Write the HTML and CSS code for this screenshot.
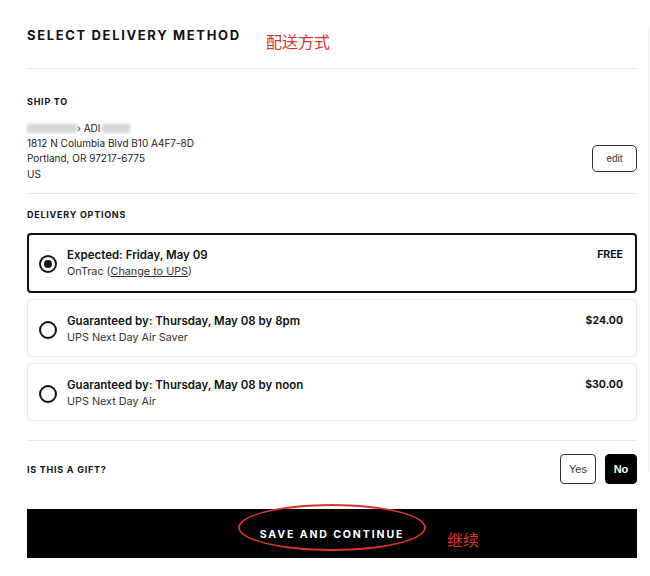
FILE: index.html
```html
<!DOCTYPE html>
<html lang="en">
<head>
    <meta charset="UTF-8">
    <meta name="viewport" content="width=device-width, initial-scale=1.0">
    <title>Select Delivery Method</title>
    <link rel="stylesheet" href="styles.css">
</head>
<body>
    <div class="side-line"></div>
    <div class="checkout">
        <!-- Header -->
        <div class="header">
            <h2>SELECT DELIVERY METHOD</h2>
            <span class="note note-title">配送方式</span>
        </div>

        <!-- Ship To -->
        <div class="ship-to">
            <h4>SHIP TO</h4>
            <div class="ship-row">
                <div class="address">
                    <div class="name"><span class="blur blur-a"></span><span>› ADI</span><span class="blur blur-b"></span></div>
                    <div>1812 N Columbia Blvd B10 A4F7-8D</div>
                    <div>Portland, OR 97217-6775</div>
                    <div>US</div>
                </div>
                <button class="btn-edit" type="button">edit</button>
            </div>
        </div>

        <!-- Delivery Options -->
        <div class="options">
            <h4>DELIVERY OPTIONS</h4>
            <div class="option selected">
                <span class="radio"></span>
                <div class="option-text">
                    <div class="option-title">Expected: Friday, May 09</div>
                    <div class="option-sub">OnTrac (<a href="#">Change to UPS</a>)</div>
                </div>
                <span class="price">FREE</span>
            </div>
            <div class="option">
                <span class="radio"></span>
                <div class="option-text">
                    <div class="option-title">Guaranteed by: Thursday, May 08 by 8pm</div>
                    <div class="option-sub">UPS Next Day Air Saver</div>
                </div>
                <span class="price">$24.00</span>
            </div>
            <div class="option">
                <span class="radio"></span>
                <div class="option-text">
                    <div class="option-title">Guaranteed by: Thursday, May 08 by noon</div>
                    <div class="option-sub">UPS Next Day Air</div>
                </div>
                <span class="price">$30.00</span>
            </div>
        </div>

        <!-- Gift -->
        <div class="gift">
            <h4>IS THIS A GIFT?</h4>
            <div class="gift-buttons">
                <button class="btn-toggle" type="button">Yes</button>
                <button class="btn-toggle active" type="button">No</button>
            </div>
        </div>

        <!-- Save -->
        <div class="save-wrap">
            <button class="btn-save" type="button">SAVE AND CONTINUE</button>
            <span class="ring"></span>
            <span class="note note-save">继续</span>
        </div>
    </div>
</body>
</html>
```

FILE: styles.css
```css
/* Global Styles */
body {
    margin: 0;
    padding: 0;
    background: #ffffff;
    font-family: 'Inter', 'Noto Sans', sans-serif;
    color: #111;
}

.side-line {
    position: absolute;
    left: 648px;
    top: 28px;
    width: 1px;
    height: 444px;
    background: #ececec;
}

.checkout {
    position: relative;
    width: 610px;
    margin-left: 27px;
}

h4 {
    margin: 0;
    font-size: 9px;
    font-weight: 700;
    letter-spacing: 0.75px;
    color: #111;
}

/* Header */
.header {
    height: 69px;
    box-sizing: border-box;
    padding-top: 27px;
    border-bottom: 1px solid #e6e6e6;
}

.header h2 {
    margin: 0;
    font-size: 13px;
    font-weight: 700;
    letter-spacing: 1.65px;
    line-height: 16px;
    color: #111;
}

.note {
    position: absolute;
    color: #d9342b;
    font-family: 'Noto Sans CJK SC', sans-serif;
    font-size: 16px;
    line-height: 20px;
}

.note-title {
    left: 239px;
    top: 31px;
}

/* Ship To */
.ship-to {
    padding-top: 27px;
    height: 125px;
    box-sizing: border-box;
    border-bottom: 1px solid #e6e6e6;
}

.ship-row {
    display: flex;
    align-items: flex-end;
    justify-content: space-between;
    margin-top: 14px;
}

.address {
    font-size: 10px;
    line-height: 15.3px;
    color: #222;
}

.name {
    display: flex;
    align-items: center;
    height: 15px;
}

.blur {
    display: inline-block;
    height: 9px;
    background: #d6d6d6;
    filter: blur(1.5px);
}

.blur-a {
    width: 50px;
}

.blur-b {
    width: 28px;
    margin-left: 2px;
}

.btn-edit {
    width: 45px;
    height: 27px;
    margin-bottom: 10px;
    background: #fff;
    border: 1px solid #333;
    border-radius: 5px;
    font-family: 'Liberation Sans', Arial, sans-serif;
    font-size: 10px;
    color: #333;
    padding: 0;
}

/* Delivery Options */
.options {
    padding-top: 15px;
    padding-bottom: 19px;
    border-bottom: 1px solid #e6e6e6;
}

.options h4 {
    margin-bottom: 13px;
}

.option {
    display: flex;
    align-items: flex-start;
    height: 58px;
    box-sizing: border-box;
    padding: 13px 13px 0 11px;
    margin-bottom: 6px;
    border: 1px solid #e6e6e6;
    border-radius: 4px;
}

.option:last-child {
    margin-bottom: 0;
}

.option.selected {
    height: 60px;
    border: 2px solid #111;
    padding: 12px 12px 0 10px;
}

.radio {
    width: 14px;
    height: 14px;
    border: 2px solid #111;
    border-radius: 50%;
    margin-top: 8px;
    margin-right: 10px;
    position: relative;
    flex-shrink: 0;
}

.option.selected .radio::after {
    content: "";
    position: absolute;
    left: 3px;
    top: 3px;
    width: 8px;
    height: 8px;
    border-radius: 50%;
    background: #111;
}

.option-text {
    flex: 1;
}

.option-title {
    font-size: 11.5px;
    font-weight: 600;
    line-height: 16px;
}

.option-sub {
    font-size: 10.8px;
    line-height: 17px;
    color: #333;
}

.option-sub a {
    color: #333;
}

.price {
    font-size: 10.5px;
    font-weight: 700;
    line-height: 16px;
}

/* Gift */
.gift {
    display: flex;
    align-items: center;
    justify-content: space-between;
    padding-top: 13px;
    height: 68px;
    box-sizing: border-box;
    padding-bottom: 25px;
}

.gift-buttons {
    display: flex;
    gap: 9px;
}

.btn-toggle {
    height: 30px;
    width: 36px;
    padding: 0;
    background: #fff;
    border: 1px solid #333;
    border-radius: 4px;
    font-family: 'Liberation Sans', Arial, sans-serif;
    font-size: 11px;
    color: #333;
}

.btn-toggle.active {
    width: 32px;
    background: #000;
    color: #fff;
    font-weight: 700;
    border-color: #000;
}

/* Save */
.save-wrap {
    position: relative;
}

.btn-save {
    display: block;
    width: 100%;
    height: 49px;
    padding-top: 2px;
    border: none;
    background: #000;
    color: #fff;
    font-family: 'Inter', sans-serif;
    font-size: 10.5px;
    font-weight: 700;
    letter-spacing: 1.9px;
}

.ring {
    position: absolute;
    left: 211px;
    top: -5px;
    width: 184px;
    height: 43px;
    border: 2px solid #d9342b;
    border-radius: 50%;
}

.note-save {
    left: 420px;
    top: 20px;
}
```
